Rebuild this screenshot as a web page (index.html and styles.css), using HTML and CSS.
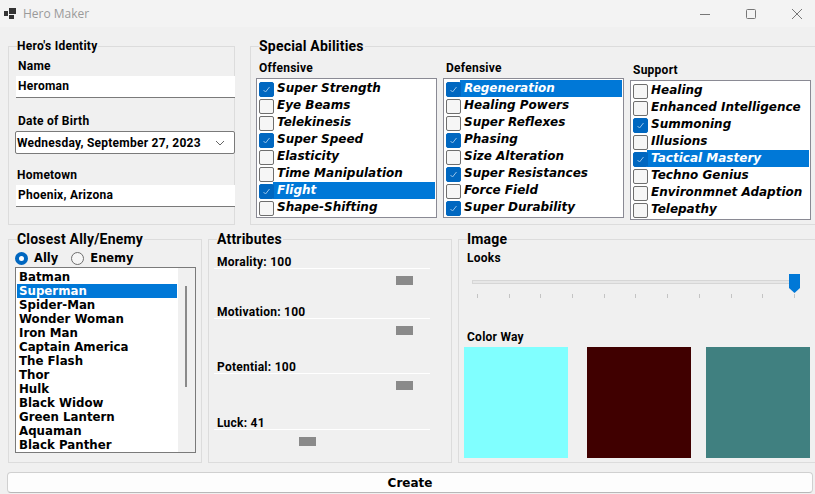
FILE: index.html
```html
<!DOCTYPE html>
<html lang="en">
<head>
    <meta charset="UTF-8">
    <meta name="viewport" content="width=device-width, initial-scale=1.0">
    <title>Hero Maker</title>
    <link rel="stylesheet" href="styles.css">
</head>
<body>
    <header class="titlebar">
        <svg class="app-icon" width="12" height="12" viewBox="0 0 12 12">
            <rect x="0" y="3" width="4" height="5" fill="#333"/>
            <rect x="5" y="0" width="7" height="6" fill="#333"/>
            <rect x="5" y="7" width="5" height="4" fill="#333"/>
        </svg>
        <span class="app-title">Hero Maker</span>
        <div class="window-controls">
            <svg width="12" height="12" viewBox="0 0 12 12"><path d="M1 6.5h10" stroke="#777" fill="none"/></svg>
            <svg width="12" height="12" viewBox="0 0 12 12"><rect x="1.5" y="1.5" width="9" height="9" rx="1" stroke="#777" fill="none"/></svg>
            <svg width="12" height="12" viewBox="0 0 12 12"><path d="M1 1l10 10M11 1L1 11" stroke="#777" fill="none"/></svg>
        </div>
    </header>

    <main class="form">
        <div class="row-top">
            <section class="group identity">
                <h2 class="legend">Hero's Identity</h2>
                <label class="label name-label">Name</label>
                <div class="textbox">Heroman</div>
                <label class="label dob-label">Date of Birth</label>
                <div class="datepicker">
                    <span>Wednesday, September 27, 2023</span>
                    <svg width="10" height="6" viewBox="0 0 10 6"><path d="M1 1l4 4 4-4" stroke="#666" fill="none"/></svg>
                </div>
                <label class="label town-label">Hometown</label>
                <div class="textbox">Phoenix, Arizona</div>
            </section>

            <section class="group abilities">
                <h2 class="legend legend-big">Special Abilities</h2>
                <div class="ability-cols">
                    <div class="ability-col col-off">
                        <h3 class="label">Offensive</h3>
                        <ul class="checklist">
                            <li class="on">Super Strength</li>
                            <li>Eye Beams</li>
                            <li>Telekinesis</li>
                            <li class="on">Super Speed</li>
                            <li>Elasticity</li>
                            <li>Time Manipulation</li>
                            <li class="on sel">Flight</li>
                            <li>Shape-Shifting</li>
                        </ul>
                    </div>
                    <div class="ability-col col-def">
                        <h3 class="label">Defensive</h3>
                        <ul class="checklist">
                            <li class="on sel">Regeneration</li>
                            <li>Healing Powers</li>
                            <li>Super Reflexes</li>
                            <li class="on">Phasing</li>
                            <li>Size Alteration</li>
                            <li class="on">Super Resistances</li>
                            <li>Force Field</li>
                            <li class="on">Super Durability</li>
                        </ul>
                    </div>
                    <div class="ability-col col-sup">
                        <h3 class="label">Support</h3>
                        <ul class="checklist">
                            <li>Healing</li>
                            <li>Enhanced Intelligence</li>
                            <li class="on">Summoning</li>
                            <li>Illusions</li>
                            <li class="on sel">Tactical Mastery</li>
                            <li>Techno Genius</li>
                            <li>Environmnet Adaption</li>
                            <li>Telepathy</li>
                        </ul>
                    </div>
                </div>
            </section>
        </div>

        <div class="row-bottom">
            <section class="group ally">
                <h2 class="legend legend-big">Closest Ally/Enemy</h2>
                <div class="radios">
                    <span class="radio on"></span><span class="radio-text">Ally</span>
                    <span class="radio"></span><span class="radio-text">Enemy</span>
                </div>
                <div class="listbox">
                    <ul class="heroes">
                        <li>Batman</li>
                        <li class="sel">Superman</li>
                        <li>Spider-Man</li>
                        <li>Wonder Woman</li>
                        <li>Iron Man</li>
                        <li>Captain America</li>
                        <li>The Flash</li>
                        <li>Thor</li>
                        <li>Hulk</li>
                        <li>Black Widow</li>
                        <li>Green Lantern</li>
                        <li>Aquaman</li>
                        <li>Black Panther</li>
                    </ul>
                    <div class="scrollbar"><div class="scroll-thumb"></div></div>
                </div>
            </section>

            <section class="group attributes">
                <h2 class="legend legend-big">Attributes</h2>
                <div class="attr attr-morality">
                    <div class="label">Morality: 100</div>
                    <div class="attr-line"></div>
                    <div class="attr-thumb" style="margin-left:182px"></div>
                </div>
                <div class="attr attr-motivation">
                    <div class="label">Motivation: 100</div>
                    <div class="attr-line"></div>
                    <div class="attr-thumb" style="margin-left:182px"></div>
                </div>
                <div class="attr attr-potential">
                    <div class="label">Potential: 100</div>
                    <div class="attr-line"></div>
                    <div class="attr-thumb" style="margin-left:182px"></div>
                </div>
                <div class="attr attr-luck">
                    <div class="label">Luck: 41</div>
                    <div class="attr-line"></div>
                    <div class="attr-thumb" style="margin-left:85px"></div>
                </div>
            </section>

            <section class="group image">
                <h2 class="legend legend-big">Image</h2>
                <div class="label looks-label">Looks</div>
                <div class="looks">
                    <div class="looks-track"></div>
                    <svg class="looks-thumb" width="11" height="19" viewBox="0 0 11 19"><path d="M0 0h11v14l-5.5 5L0 14z" fill="#0078d7"/></svg>
                    <div class="ticks">
                        <i></i><i></i><i></i><i></i><i></i><i></i><i></i><i></i><i></i><i></i><i></i>
                    </div>
                </div>
                <div class="label color-label">Color Way</div>
                <div class="swatches">
                    <div class="swatch swatch-a"></div>
                    <div class="swatch swatch-b"></div>
                    <div class="swatch swatch-c"></div>
                </div>
            </section>
        </div>

        <button class="create">Create</button>
    </main>
</body>
</html>
```

FILE: styles.css
```css
* {
    box-sizing: border-box;
}
html, body {
    margin: 0;
    padding: 0;
    height: 494px;
    overflow: hidden;
}
body {
    width: 815px;
    background: #f0f0f0;
    color: #000;
    font-family: Roboto, "Liberation Sans", sans-serif;
}
ul {
    list-style: none;
    margin: 0;
    padding: 0;
}

/* title bar */
.titlebar {
    height: 27px;
    background: #f3f3f3;
    display: flex;
    align-items: center;
    padding-left: 4px;
}
.app-icon {
    margin-right: 7px;
}
.app-title {
    font-family: "Open Sans", sans-serif;
    font-size: 12px;
    color: #9a9a9a;
}
.window-controls {
    margin-left: auto;
    display: flex;
    gap: 34px;
    padding-right: 12px;
}

/* layout */
.form {
    padding: 19px 0 0 8px;
}
.row-top {
    display: flex;
    gap: 15px;
    height: 179px;
}
.row-bottom {
    display: flex;
    gap: 6px;
    height: 224px;
    margin-top: 14px;
}
.group {
    border: 1px solid #dcdcdc;
    height: 100%;
}
.legend {
    margin: -9px 0 0 3px;
    padding: 0 1px 0 0;
    width: max-content;
    height: 17px;
    line-height: 17px;
    background: #f0f0f0;
    font-size: 12px;
    font-weight: 700;
    letter-spacing: 0.25px;
}
.legend-big {
    font-size: 14px;
    letter-spacing: 0.2px;
}
.label {
    display: block;
    margin: 0;
    font-size: 12px;
    font-weight: 700;
    line-height: 16px;
    letter-spacing: 0.25px;
}

/* identity */
.identity {
    width: 227px;
    padding-left: 7px;
}
.identity .legend {
    margin-left: 1px;
}
.name-label {
    margin: 3px 0 2px 2px;
}
.dob-label {
    margin: 15px 0 2px 2px;
}
.town-label {
    margin: 13px 0 2px 1px;
}
.textbox {
    width: 219px;
    height: 22px;
    line-height: 21px;
    padding-left: 2px;
    background: #fff;
    border-bottom: 1px solid #7a7a7a;
    font-size: 12px;
    font-weight: 700;
    letter-spacing: 0.25px;
}
.datepicker {
    width: 220px;
    height: 23px;
    margin-left: -1px;
    padding: 0 9px 0 1px;
    background: #fff;
    border: 1px solid #7a7a7a;
    border-radius: 2px;
    display: flex;
    align-items: center;
    justify-content: space-between;
    font-size: 12px;
    font-weight: 700;
    letter-spacing: 0.25px;
}

/* special abilities */
.abilities {
    flex: 1;
    border-right: none;
    padding-left: 5px;
}
.ability-cols {
    display: flex;
    gap: 6px;
}
.ability-col {
    width: 181px;
}
.col-off .label, .col-def .label {
    margin: 5px 0 2px 3px;
}
.col-sup .label {
    margin: 7px 0 2px 3px;
}
.checklist {
    height: 140px;
    background: #fff;
    border: 1px solid #8a8a94;
    padding: 1px;
    font-family: "DejaVu Sans", sans-serif;
    font-size: 12px;
    font-weight: 700;
    font-style: italic;
}
.checklist li {
    height: 17px;
    line-height: 16px;
    padding-left: 19px;
    white-space: nowrap;
    position: relative;
}
.checklist li::before {
    content: "";
    position: absolute;
    left: 1px;
    top: 2px;
    width: 13px;
    height: 13px;
    background: #f6f6f6;
    border: 1px solid #6e6e6e;
    border-radius: 2px;
}
.checklist li.on::before {
    background: #0067c0 url("data:image/svg+xml,%3Csvg xmlns='http://www.w3.org/2000/svg' width='13' height='13'%3E%3Cpath d='M3.5 7l2 2 4-5' stroke='%2399c4ea' fill='none'/%3E%3C/svg%3E") no-repeat center;
    border-color: #0067c0;
}
.checklist li.sel {
    color: #fff;
    background: linear-gradient(#0078d7, #0078d7) no-repeat 15px 0 / calc(100% - 15px) 100%;
}

/* ally list */
.ally {
    width: 194px;
    padding-left: 6px;
}
.ally .legend {
    margin-left: 2px;
}
.radios {
    display: flex;
    align-items: center;
    height: 18px;
    margin-top: 1px;
    font-family: "DejaVu Sans", sans-serif;
    font-size: 11.5px;
    font-weight: 700;
}
.radio {
    width: 13px;
    height: 13px;
    border: 1px solid #6e6e6e;
    border-radius: 50%;
    background: #f6f6f6;
}
.radio.on {
    border: 4px solid #0067c0;
    background: #fff;
}
.radio-text {
    margin: 0 13px 0 6px;
}
.listbox {
    width: 181px;
    height: 186px;
    background: #fff;
    border: 1px solid #7a7a7a;
    display: flex;
    justify-content: space-between;
    padding-left: 1px;
    font-family: "DejaVu Sans", sans-serif;
    font-size: 11.8px;
    font-weight: 700;
}
.heroes {
    width: 160px;
    padding-top: 2px;
}
.heroes li {
    height: 14px;
    line-height: 14px;
    padding-left: 2px;
    white-space: nowrap;
}
.heroes li.sel {
    background: #0078d7;
    color: #fff;
}
.scrollbar {
    width: 17px;
    height: 100%;
    background: #f0f0f0;
    padding: 18px 0 0 7px;
}
.scroll-thumb {
    width: 2px;
    height: 101px;
    background: #8a8a8a;
}

/* attributes */
.attributes {
    width: 244px;
    padding-left: 5px;
}
.attr {
    width: 216px;
}
.attr .label {
    padding-left: 3px;
    height: 14px;
    line-height: 16px;
}
.attr-line {
    height: 1px;
    background: #fff;
}
.attr-thumb {
    width: 17px;
    height: 9px;
    background: #8a8a8a;
    margin-top: 7px;
}
.attr-morality {
    margin-top: 6px;
}
.attr-motivation {
    margin-top: 19px;
}
.attr-potential {
    margin-top: 24px;
}
.attr-luck {
    margin-top: 25px;
}

/* image */
.image {
    flex: 1;
    border-right: none;
    padding-left: 5px;
}
.looks-label {
    margin: 2px 0 0 3px;
}
.looks {
    position: relative;
    width: 336px;
    height: 35px;
    margin-top: 8px;
    padding: 6px 0 0 8px;
}
.looks-track {
    height: 4px;
    width: 328px;
    background: #e7e7e7;
    border: 1px solid #d6d6d6;
}
.looks-thumb {
    position: absolute;
    left: 325px;
    top: 0;
}
.ticks {
    display: flex;
    justify-content: space-between;
    width: 318px;
    margin: 10px 0 0 5px;
}
.ticks i {
    width: 1px;
    height: 4px;
    background: #c4c4c4;
}
.color-label {
    margin: 20px 0 2px 3px;
}
.swatches {
    display: flex;
}
.swatch {
    width: 104px;
    height: 111px;
}
.swatch-a {
    background: #80ffff;
}
.swatch-b {
    background: #400000;
    margin-left: 19px;
}
.swatch-c {
    background: #408080;
    margin-left: 15px;
}

/* create button */
.create {
    display: block;
    width: 806px;
    height: 21px;
    margin: 9px 0 0 -1px;
    padding: 0;
    background: #fdfdfd;
    border: 1px solid #d0d0d0;
    border-bottom-color: #b8b8b8;
    border-radius: 4px;
    font-family: "DejaVu Sans", sans-serif;
    font-size: 12px;
    font-weight: 700;
}
```
